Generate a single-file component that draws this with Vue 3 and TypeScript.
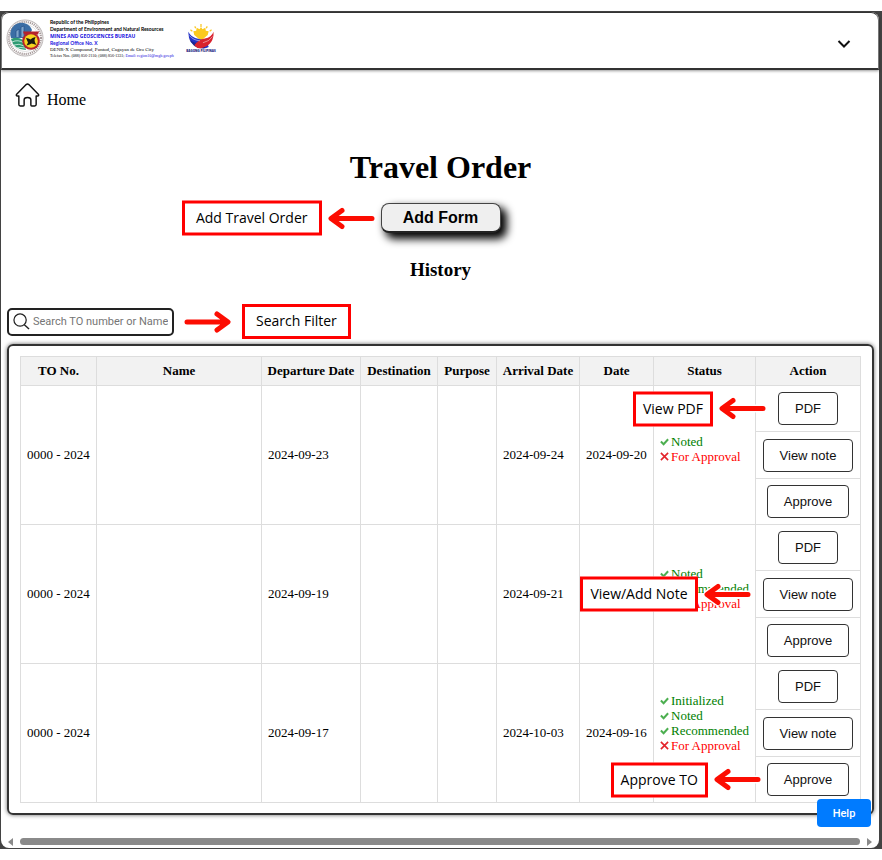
<script setup lang="ts">
import { ref } from 'vue'

interface Status {
  label: string
  done: boolean
}

interface TravelOrder {
  id: number
  number: string
  name: string
  departure: string
  destination: string
  purpose: string
  arrival: string
  date: string
  statuses: Status[]
}

interface RowAction {
  label: string
  note: string
  orderId: number
}

const search = ref('')

const columns: { label: string; key: string }[] = [
  { label: 'TO No.', key: 'number' },
  { label: 'Name', key: 'name' },
  { label: 'Departure Date', key: 'departure' },
  { label: 'Destination', key: 'destination' },
  { label: 'Purpose', key: 'purpose' },
  { label: 'Arrival Date', key: 'arrival' },
  { label: 'Date', key: 'date' },
  { label: 'Status', key: 'status' },
  { label: 'Action', key: 'action' },
]

const orders: TravelOrder[] = [
  {
    id: 1, number: '0000 - 2024', name: '', departure: '2024-09-23', destination: '', purpose: '',
    arrival: '2024-09-24', date: '2024-09-20',
    statuses: [{ label: 'Noted', done: true }, { label: 'For Approval', done: false }],
  },
  {
    id: 2, number: '0000 - 2024', name: '', departure: '2024-09-19', destination: '', purpose: '',
    arrival: '2024-09-21', date: '',
    statuses: [
      { label: 'Noted', done: true },
      { label: 'Recommended', done: true },
      { label: 'For Approval', done: false },
    ],
  },
  {
    id: 3, number: '0000 - 2024', name: '', departure: '2024-09-17', destination: '', purpose: '',
    arrival: '2024-10-03', date: '2024-09-16',
    statuses: [
      { label: 'Initialized', done: true },
      { label: 'Noted', done: true },
      { label: 'Recommended', done: true },
      { label: 'For Approval', done: false },
    ],
  },
]

// Each action is explained by a callout on one of the orders.
const actions: RowAction[] = [
  { label: 'PDF', note: 'View PDF', orderId: 1 },
  { label: 'View note', note: 'View/Add Note', orderId: 2 },
  { label: 'Approve', note: 'Approve TO', orderId: 3 },
]
</script>

<template>
  <div class="frame">
    <div class="window">
      <header class="topbar">
        <svg class="seal" viewBox="0 0 38 38" aria-hidden="true">
          <circle cx="19" cy="19" r="18" fill="#fff" stroke="#b9b3b3" stroke-width="1" />
          <circle cx="19" cy="19" r="16" fill="none" stroke="#a89c9c" stroke-width="2.2" stroke-dasharray="1.2 .9" />
          <circle cx="19" cy="19" r="13.6" fill="#fff" stroke="#d0d0d0" stroke-width=".6" />
          <path d="M5 19A11 11 0 0 1 26 11L22 19Z" fill="#3b6ea5" />
          <path d="M10 18V12l3-2v8M15 18V8l3-1v11" fill="#7fa6cc" stroke="#234f86" stroke-width=".7" />
          <path d="M5 20Q11 17 17 21L20 31Q8 31 5 20Z" fill="#2e9b73" />
          <path d="M6 23q6-3 12 1M8 26q5-2 10 1M11 29q4-1 8 0" fill="none" stroke="#d9f1e8" stroke-width=".8" />
          <path d="M17 12.500H33L32 15.500H18Z" fill="#b5232b" />
          <circle cx="25" cy="22" r="8.8" fill="#b5232b" />
          <circle cx="25" cy="22" r="6.8" fill="#f6d51f" />
          <path d="M20 19l2.500.5 2 1 2-1.500 3-1-1 3 .5 2.500 1.500 2.500-3-1-2-.5-2 1-3 1 1.500-3z" fill="#1c1a10" />
        </svg>
        <div class="letterhead">
          <p class="strong">Republic of the Philippines</p>
          <p class="strong">Department of Environment and Natural Resources</p>
          <p class="bureau">MINES AND GEOSCIENCES BUREAU</p>
          <p class="strong blue">Regional Office No. X</p>
          <p class="address">DENR-X Compound, Puntod, Cagayan de Oro City</p>
          <p class="contact">Telefax Nos. (088) 856-2110; (088) 856-1331; <span class="blue">Email: region10@mgb.gov.ph</span></p>
        </div>
        <div class="bagong">
          <svg class="bagong-mark" viewBox="0 0 28 26" aria-hidden="true">
            <path d="M14 0v3M7.500 2.500l1 2M20.500 2.500l-1 2M3 6l2 1.500M25 6l-2 1.500" stroke="#f9c623" stroke-width="1.300" />
            <path d="M14 3l1.500 2.500 3-1.500.5 3 3 .5-1 4-7 6-7-6-1-4 3-.5.5-3 3 1.500z" fill="#fbc91e" />
            <path d="M1 8Q3 14 12 15.500T22 24Q17 27 11 24Q0 19 1 8Z" fill="#2433c8" />
            <path d="M1 14Q3 19 11 20T18 25Q6 27 1 14Z" fill="#1b2390" />
            <path d="M27 8Q25 14 18 15T7 22Q10 26 15 25Q28 21 27 8Z" fill="#d9222e" />
            <path d="M2 12Q6 17 13 17.500M26 13Q23 18 16 19.500" fill="none" stroke="#fff" stroke-width=".5" />
          </svg>
          <span class="bagong-name">BAGONG PILIPINAS</span>
        </div>
        <button class="menu" type="button" aria-label="Open menu">
          <svg viewBox="0 0 14 10" aria-hidden="true">
            <path d="M1.500 2L7 7.500L12.500 2" fill="none" stroke="#111" stroke-width="2" />
          </svg>
        </button>
      </header>

      <a class="home" href="#">
        <svg viewBox="0 0 26 26" aria-hidden="true">
          <path
            d="M1.500 12.500L11.600 2.200Q13 .9 14.400 2.200L24.500 12.500Q25 14 23.500 14H22V23Q22 24.500 20.500 24.500H17.500Q16.500 24.500 16.500 23.500V18Q16.500 15.500 13 15.500T9.500 18V23.500Q9.500 24.500 8.500 24.500H5.500Q4 24.500 4 23V14H2.500Q1 14 1.500 12.500Z"
            fill="none" stroke="#111" stroke-width="1.500" stroke-linejoin="round"
          />
        </svg>
        <span>Home</span>
      </a>

      <main>
        <h1>Travel Order</h1>
        <div class="add-row">
          <div class="anchor">
            <button class="add" type="button">Add Form</button>
            <div class="callout near">
              <span class="callout-box wide">Add Travel Order</span>
              <svg class="arrow" viewBox="0 0 47 22" aria-hidden="true">
                <path d="M44 11H4M14 3L3 11L14 19" />
              </svg>
            </div>
          </div>
        </div>
        <h2>History</h2>

        <div class="search-row">
          <label class="search">
            <svg viewBox="0 0 18 18" aria-hidden="true">
              <circle cx="7.500" cy="7.500" r="6.500" fill="none" stroke="#222" stroke-width="1.300" />
              <path d="M12 12.500L17 17" stroke="#222" stroke-width="1.500" />
            </svg>
            <input v-model="search" type="text" placeholder="Search TO number or Name" aria-label="Search TO number or Name">
          </label>
          <svg class="arrow" viewBox="0 0 47 22" aria-hidden="true">
            <path d="M3 11H43M33 3L44 11L33 19" />
          </svg>
          <span class="callout-box wide">Search Filter</span>
        </div>

        <section class="panel">
          <table>
            <colgroup>
              <col v-for="column in columns" :key="column.key" :class="'col-' + column.key">
            </colgroup>
            <thead>
              <tr>
                <th v-for="column in columns" :key="column.key" scope="col">{{ column.label }}</th>
              </tr>
            </thead>
            <tbody v-for="order in orders" :key="order.id">
              <tr v-for="(action, index) in actions" :key="action.label">
                <template v-if="index === 0">
                  <td rowspan="3">{{ order.number }}</td>
                  <td rowspan="3">{{ order.name }}</td>
                  <td rowspan="3">{{ order.departure }}</td>
                  <td rowspan="3">{{ order.destination }}</td>
                  <td rowspan="3">{{ order.purpose }}</td>
                  <td rowspan="3">{{ order.arrival }}</td>
                  <td rowspan="3">{{ order.date }}</td>
                  <td rowspan="3">
                    <ul class="statuses" :class="{ complete: order.statuses.length === 4 }">
                      <li v-for="status in order.statuses" :key="status.label" :class="{ pending: !status.done }">
                        <svg v-if="status.done" viewBox="0 0 10 10" aria-hidden="true">
                          <path d="M1 5L4 8L9 2.500" fill="none" stroke="#4caf50" stroke-width="2.200" />
                        </svg>
                        <svg v-else viewBox="0 0 10 10" aria-hidden="true">
                          <path d="M1 1L9 9M9 1L1 9" fill="none" stroke="#e3242b" stroke-width="1.800" />
                        </svg>
                        {{ status.label }}
                      </li>
                    </ul>
                  </td>
                </template>
                <td class="action">
                  <div class="anchor">
                    <button type="button">{{ action.label }}</button>
                    <div v-if="action.orderId === order.id" class="callout" :class="{ near: action.label === 'Approve' }">
                      <span class="callout-box">{{ action.note }}</span>
                      <svg class="arrow" viewBox="0 0 47 22" aria-hidden="true">
                        <path class="halo" d="M44 11H4M14 3L3 11L14 19" />
                        <path d="M44 11H4M14 3L3 11L14 19" />
                      </svg>
                    </div>
                  </div>
                </td>
              </tr>
            </tbody>
          </table>
        </section>
      </main>

      <div class="scrollbar" aria-hidden="true">
        <svg viewBox="0 0 5 8"><path d="M5 0V8L0 4Z" fill="#8a8a8a" /></svg>
        <div class="thumb"></div>
        <svg viewBox="0 0 5 8"><path d="M0 0V8L5 4Z" fill="#8a8a8a" /></svg>
      </div>
      <button class="help" type="button">Help</button>
    </div>
  </div>
</template>

<style>
body {
  margin: 0;
  background: #fff;
}
</style>

<style scoped>
* {
  box-sizing: border-box;
}

.frame {
  margin: 11px 0;
  padding: 1px 3px 1px 1px;
  background: #434343;
  color: #000;
  font-family: "Liberation Serif", "Times New Roman", serif;
}

.window {
  position: relative;
  background: #fff;
  border-radius: 8px;
}

.topbar {
  display: flex;
  align-items: flex-start;
  height: 58px;
  padding: 6px 27px 0 4px;
  border: 1px solid #777;
  border-top-color: #333;
  border-bottom: 2px solid #333;
  border-radius: 8px 8px 0 0;
  box-shadow: 0 1px 3px rgba(0, 0, 0, 0.4);
}

.seal {
  width: 38px;
  height: 38px;
}

.letterhead {
  width: 124px;
  margin-left: 6px;
  font-family: Lato, sans-serif;
  font-size: 5px;
  line-height: 7px;
  white-space: nowrap;
}

.letterhead p {
  margin: 0;
}

.strong {
  font-weight: 700;
}

.bureau {
  color: #1a12e0;
  font-family: "Open Sans", sans-serif;
  font-weight: 700;
}

.blue {
  color: #1a12e0;
}

.letterhead .address,
.letterhead .contact {
  font-family: "Liberation Serif", serif;
  line-height: 6px;
}

.letterhead .contact {
  font-size: 4px;
}

.bagong {
  display: flex;
  flex-direction: column;
  align-items: center;
  width: 34px;
  margin: 5px 0 0 10px;
}

.bagong-mark {
  width: 28px;
  height: 25px;
}

.bagong-name {
  color: #1b2380;
  font-family: "Open Sans", sans-serif;
  font-size: 3px;
  font-weight: 800;
  line-height: 5px;
  white-space: nowrap;
}

.menu {
  width: 14px;
  height: 10px;
  margin: 20px 0 0 auto;
  padding: 0;
  border: 0;
  background: none;
}

.menu svg {
  display: block;
}

.home {
  display: inline-flex;
  align-items: flex-start;
  gap: 7px;
  margin: 12px 0 0 14px;
  color: #000;
  font-size: 16px;
  line-height: 36px;
  text-decoration: none;
}

.home svg {
  width: 25px;
  height: 26px;
}

main {
  padding: 0 5px 0 6px;
}

h1 {
  margin: 30px 0 0;
  font-size: 32px;
  line-height: 38px;
  text-align: center;
}

.add-row {
  display: flex;
  justify-content: center;
  margin-top: 17px;
}

.anchor {
  position: relative;
}

.add {
  display: block;
  width: 120px;
  height: 30px;
  padding: 0;
  border: 1px solid #444;
  border-bottom: 2px solid #222;
  border-radius: 8px;
  background: #efefef;
  box-shadow: 5px 5px 8px 1px #000;
  color: #000;
  font: 700 16px "Liberation Sans", Arial, sans-serif;
}

.callout {
  position: absolute;
  top: 50%;
  right: calc(100% + 12px);
  z-index: 1;
  display: flex;
  align-items: center;
  gap: 6px;
  transform: translateY(-50%);
}

.callout.near {
  right: calc(100% + 6px);
}

.callout-box {
  height: 35px;
  padding: 0 7px;
  border: 3px solid #f00;
  background: #fff;
  color: #000;
  font: 14px/27px "Open Sans", "Noto Sans", sans-serif;
  white-space: nowrap;
}

.callout-box.wide {
  padding: 0 11px;
}

.arrow {
  flex: none;
  width: 47px;
  height: 22px;
}

.arrow path {
  fill: none;
  stroke: #fc0d02;
  stroke-width: 5;
  stroke-linecap: round;
  stroke-linejoin: round;
}

.arrow .halo {
  stroke: #fff;
  stroke-width: 8;
}

h2 {
  margin: 26px 0 0;
  font-size: 19px;
  line-height: 22px;
  text-align: center;
}

.search-row {
  display: flex;
  align-items: center;
  margin-top: 23px;
}

.search-row .arrow {
  margin: 0 11px 0 10px;
}

.search {
  display: flex;
  align-items: center;
  gap: 3px;
  width: 167px;
  height: 28px;
  padding: 0 4px;
  border: 2px solid #222;
  border-radius: 5px;
}

.search svg {
  flex: none;
  width: 17px;
  height: 17px;
}

.search input {
  width: 100%;
  min-width: 0;
  padding: 0;
  border: 0;
  outline: 0;
  background: none;
  font: 11px Roboto, sans-serif;
}

.search input::placeholder {
  color: #757575;
}

.panel {
  margin-top: 5px;
  padding: 10px 11px;
  border: 2px solid #333;
  border-radius: 6px;
  box-shadow: 0 0 4px rgba(0, 0, 0, 0.6);
}

table {
  width: 100%;
  border-collapse: collapse;
  table-layout: fixed;
  font-size: 13px;
}

.col-number { width: 76px; }
.col-departure { width: 99px; }
.col-destination { width: 77px; }
.col-purpose { width: 59px; }
.col-arrival { width: 83px; }
.col-date { width: 74px; }
.col-status { width: 102px; }
.col-action { width: 105px; }

th,
td {
  padding: 0 6px;
  border: 1px solid #ddd;
  text-align: left;
}

th {
  height: 29px;
  padding: 0;
  background: #f2f2f2;
  text-align: center;
  white-space: nowrap;
}

td.action {
  height: 46px;
  padding: 0;
  text-align: center;
}

tr:nth-child(2) td.action {
  height: 47px;
}

.action .anchor {
  display: inline-block;
  vertical-align: middle;
}

.action button {
  display: block;
  height: 33px;
  padding: 0 16px;
  border: 1px solid #333;
  border-radius: 4px;
  background: #fff;
  color: #111;
  font: 13px "Liberation Sans", Arial, sans-serif;
}

.statuses {
  margin: 0;
  padding: 0 0 12px;
  color: #008000;
  line-height: 15px;
  list-style: none;
}

.statuses.complete {
  padding-bottom: 20px;
}

.statuses li {
  display: flex;
  align-items: center;
  gap: 2px;
}

.statuses svg {
  flex: none;
  width: 9px;
  height: 9px;
}

.statuses .pending {
  color: #f00;
}

.scrollbar {
  display: flex;
  align-items: center;
  gap: 7px;
  height: 13px;
  margin-top: 20px;
  padding: 0 7px;
}

.scrollbar svg {
  width: 5px;
  height: 8px;
}

.thumb {
  flex: 1;
  height: 7px;
  border-radius: 4px;
  background: #8a8a8a;
}

.help {
  position: absolute;
  right: 8px;
  bottom: 21px;
  z-index: 2;
  width: 54px;
  height: 28px;
  padding: 0;
  border: 0;
  border-radius: 4px;
  background: #007bff;
  color: #fff;
  font: 500 11px Roboto, sans-serif;
}
</style>
